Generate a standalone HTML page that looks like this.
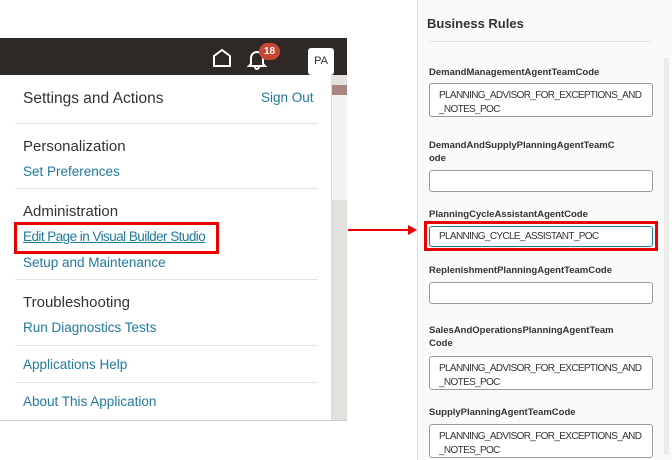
<!DOCTYPE html>
<html><head><style>
*{margin:0;padding:0;box-sizing:border-box}
body{width:672px;height:460px;background:#fff;position:relative;overflow:hidden;font-family:"Liberation Sans",sans-serif}
.a{position:absolute}
.h{font-size:15px;color:#333}
.l{font-size:13.5px;color:#1f7a9c}
.sep{position:absolute;left:15px;width:303px;height:1px;background:#e4e4e4}
.lab{position:absolute;left:429px;font-size:9.5px;font-weight:bold;color:#333;line-height:13px}
.in{position:absolute;left:429px;width:224px;border:1px solid #9a9a9a;border-radius:3px;background:#fff;font-size:10px;letter-spacing:-0.65px;color:#333;padding:5px 9px;line-height:14px;white-space:nowrap;overflow:hidden}
</style></head><body>
<div class="a" style="left:0;top:38px;width:347px;height:37px;background:#2e2826"></div>
<div class="a" style="left:332px;top:75px;width:15px;height:345px;background:#e3e1de"></div>
<div class="a" style="left:332px;top:85px;width:15px;height:10px;background:#a88680"></div>
<div class="a" style="left:332px;top:95px;width:15px;height:105px;background:#f4f2f0"></div>
<div class="a" style="left:0;top:420px;width:347px;height:1px;background:#ccc"></div>
<svg class="a" style="left:212px;top:48px" width="20" height="20" viewBox="0 0 20 20"><path d="M2 18V8L10 2L18 8V18Z" fill="none" stroke="#fff" stroke-width="2"/></svg>
<svg class="a" style="left:247px;top:48px" width="20" height="22" viewBox="0 0 20 22"><path d="M4 16V10a6 6 0 0 1 12 0v6l2 2H2Z M8 19a2 2 0 0 0 4 0" fill="none" stroke="#fff" stroke-width="2"/></svg>
<div class="a" style="left:259px;top:43px;width:21px;height:17px;border-radius:9px;background:#c74634;color:#fff;font-size:10px;font-weight:bold;text-align:center;line-height:17px">18</div>
<div class="a" style="left:308px;top:48px;width:26px;height:27px;background:#fff;border-radius:3px;font-size:11px;color:#333;text-align:center;line-height:27px">PA</div>
<div class="a" style="left:0;top:75px;width:332px;height:345px;background:#fff;border-right:1px solid #ddd"></div>
<div class="a h" style="left:23px;top:90px;font-size:15.5px">Settings and Actions</div>
<div class="a l" style="left:261px;top:90px">Sign Out</div>
<div class="sep" style="top:123px"></div>
<div class="a h" style="left:23px;top:138px">Personalization</div>
<div class="a l" style="left:23px;top:164px">Set Preferences</div>
<div class="sep" style="top:188px"></div>
<div class="a h" style="left:23px;top:203px">Administration</div>
<div class="a l" style="left:23px;top:229px;text-decoration:underline;letter-spacing:-0.55px">Edit Page in Visual Builder Studio</div>
<div class="a" style="left:14px;top:222px;width:205px;height:32px;border:3px solid #e00"></div>
<div class="a l" style="left:23px;top:255px">Setup and Maintenance</div>
<div class="sep" style="top:279px"></div>
<div class="a h" style="left:23px;top:294px">Troubleshooting</div>
<div class="a l" style="left:23px;top:320px">Run Diagnostics Tests</div>
<div class="sep" style="top:345px"></div>
<div class="a l" style="left:23px;top:357px">Applications Help</div>
<div class="sep" style="top:382px"></div>
<div class="a l" style="left:23px;top:394px">About This Application</div>
<div class="a" style="left:348px;top:229px;width:62px;height:2px;background:#e00"></div>
<svg class="a" style="left:408px;top:225px" width="9" height="10"><path d="M0 0L9 5L0 10Z" fill="#e00"/></svg>
<div class="a" style="left:417px;top:0;width:255px;height:460px;background:#fafafa;border-left:1px solid #ddd"></div>
<div class="a" style="left:427px;top:16px;font-size:13px;font-weight:bold;color:#333">Business Rules</div>
<div class="a" style="left:429px;top:41px;width:222px;height:1px;background:#e4e4e4"></div>
<div class="a" style="left:664px;top:58px;width:5px;height:397px;background:#ececec"></div>
<div class="lab" style="top:66px">DemandManagementAgentTeamCode</div>
<div class="in" style="top:83px;height:34px">PLANNING_ADVISOR_FOR_EXCEPTIONS_AND<br>_NOTES_POC</div>
<div class="lab" style="top:139px">DemandAndSupplyPlanningAgentTeamC<br>ode</div>
<div class="in" style="top:170px;height:22px"></div>
<div class="lab" style="top:208px">PlanningCycleAssistantAgentCode</div>
<div class="a" style="left:424px;top:221px;width:234px;height:30px;border:3px solid #e00"></div>
<div class="in" style="top:226px;height:21px;border-color:#1f7a9c;padding-top:3px">PLANNING_CYCLE_ASSISTANT_POC</div>
<div class="lab" style="top:264px">ReplenishmentPlanningAgentTeamCode</div>
<div class="in" style="top:282px;height:22px"></div>
<div class="lab" style="top:324px">SalesAndOperationsPlanningAgentTeam<br>Code</div>
<div class="in" style="top:356px;height:34px">PLANNING_ADVISOR_FOR_EXCEPTIONS_AND<br>_NOTES_POC</div>
<div class="lab" style="top:406px">SupplyPlanningAgentTeamCode</div>
<div class="in" style="top:424px;height:34px">PLANNING_ADVISOR_FOR_EXCEPTIONS_AND<br>_NOTES_POC</div>
</body></html>
